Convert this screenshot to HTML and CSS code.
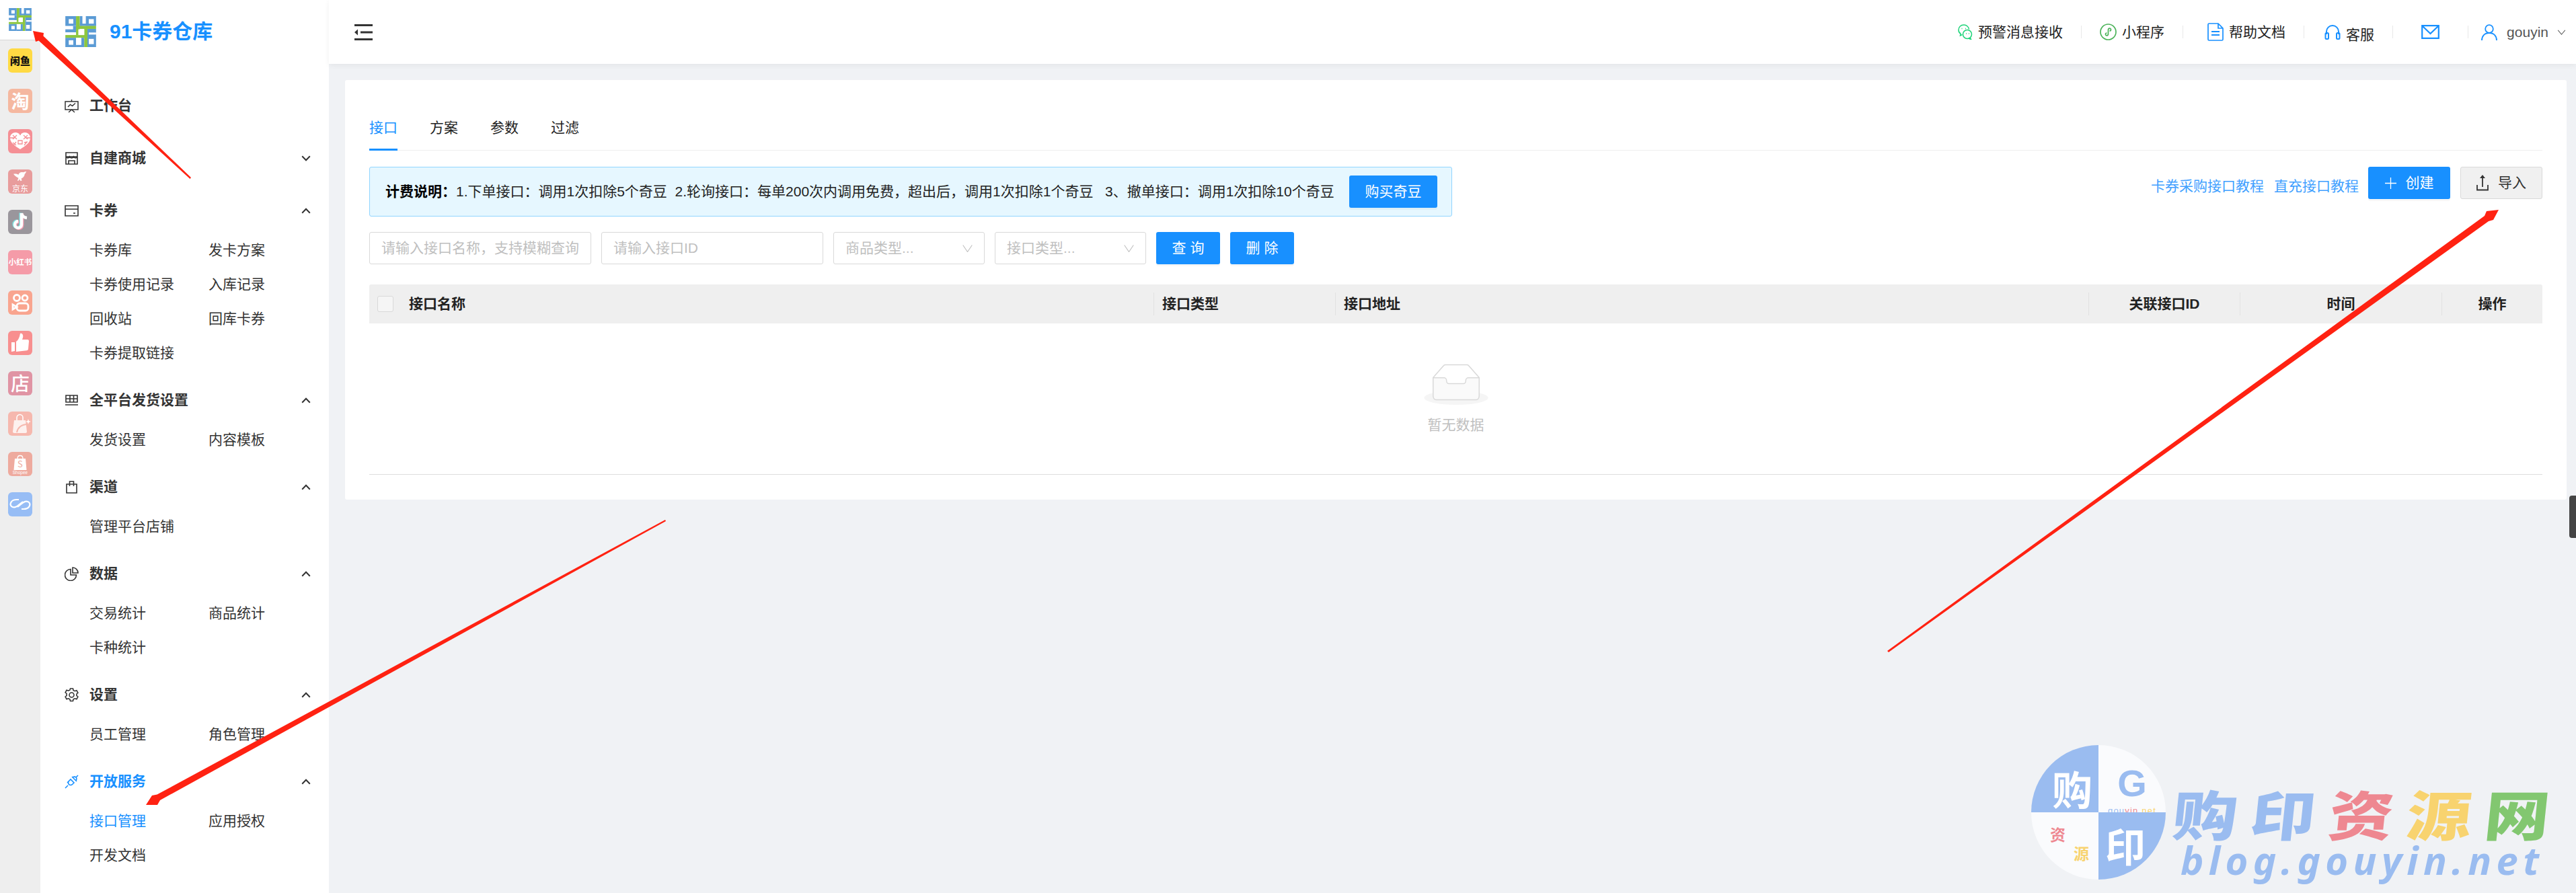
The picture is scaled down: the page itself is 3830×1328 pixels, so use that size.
FILE: index.html
```html
<!DOCTYPE html>
<html lang="zh-CN">
<head>
<meta charset="utf-8">
<title>接口管理</title>
<link rel="stylesheet" href="styles.css">
</head>
<body>
<svg class="defs" width="0" height="0" aria-hidden="true">
  <defs>
    <symbol id="logo" viewBox="0 0 135 136">
      <g fill="#5b9bd5">
        <rect x="0" y="0" width="47" height="43"/><rect x="34" y="43" width="13" height="28"/><rect x="0" y="58" width="47" height="13"/>
        <rect x="63" y="0" width="12" height="43"/><rect x="63" y="33" width="72" height="10"/><rect x="90" y="0" width="45" height="43"/>
        <rect x="97" y="56" width="38" height="80"/>
        <rect x="0" y="95" width="47" height="41"/><rect x="70" y="95" width="13" height="41"/><rect x="47" y="126" width="36" height="10"/>
      </g>
      <g fill="#fff">
        <rect x="15" y="13" width="20" height="20"/><rect x="103" y="13" width="22" height="20"/>
        <rect x="103" y="100" width="22" height="23"/><rect x="15" y="106" width="20" height="20"/>
        <rect x="103" y="72" width="32" height="9"/><rect x="47" y="95" width="23" height="31"/>
      </g>
      <g fill="#8cc63f">
        <rect x="47" y="0" width="16" height="83"/><rect x="47" y="43" width="88" height="13"/>
        <rect x="0" y="83" width="97" height="12"/><rect x="83" y="56" width="14" height="80"/>
      </g>
      <rect x="57" y="58" width="26" height="25" fill="#fff"/>
    </symbol>
    <symbol id="chev" viewBox="0 0 14 9"><path d="M1.2 1.2 7 7.2l5.8-6" fill="none" stroke="currentColor" stroke-width="2"/></symbol>
  </defs>
</svg>

<aside class="rail">
  <div class="rail-top"><svg class="rail-logo"><use href="#logo"/></svg></div>
  <div class="rail-list">
    <div class="app app-xy">闲鱼</div>
    <div class="app app-tb">淘</div>
    <div class="app app-pdd">
      <svg viewBox="0 0 36 36" class="app-svg"><path d="M18 30C10 25 3 20 3 13c0-5 4-8 8-8 3 0 5 1 7 4 2-3 4-4 7-4 4 0 8 3 8 8 0 7-7 12-15 17z" fill="#fff"/><path d="M7 9l6 6M7 15l6-6M23 9l6 6M23 15l6-6M7 20l5 4M12 19l-4 5M24 20l5-1M24 24l4-5M15 17h6v5h-6zM18 5v4M10 13H3M33 13h-7" stroke="#f58f95" stroke-width="1.3" fill="none"/></svg>
    </div>
    <div class="app app-jd">
      <svg viewBox="0 0 36 24" class="app-jd-dog"><path d="M6 7c4-1 6 0 9 1 1-3 4-5 8-4 2-1 4-1 6-2-1 3-2 4-3 5 0 4-3 7-6 8l1 4h-3l-1-3-2 3h-2l2-5c-3-1-6-3-9-7z" fill="#fff"/></svg>
      <span class="app-jd-text">京东</span>
    </div>
    <div class="app app-dy">
      <svg viewBox="0 0 36 36" class="app-svg"><path d="M20 5v17a5 5 0 1 1-5-5" fill="none" stroke="#7fe0e0" stroke-width="4.4" transform="translate(-1.4 -.6)"/><path d="M20 5v17a5 5 0 1 1-5-5" fill="none" stroke="#f8a0b4" stroke-width="4.4" transform="translate(1.2 .8)"/><path d="M20 5v17a5 5 0 1 1-5-5" fill="none" stroke="#fff" stroke-width="4.4"/><path d="M20 5c.6 4 3.500 6.500 8 7" fill="none" stroke="#fff" stroke-width="4.400"/></svg>
    </div>
    <div class="app app-xhs">小红书</div>
    <div class="app app-ks">
      <svg viewBox="0 0 36 36" class="app-svg" fill="none" stroke="#fff" stroke-width="2.800"><circle cx="13" cy="11" r="4.500"/><circle cx="25" cy="11" r="4"/><rect x="13" y="19" width="17" height="11" rx="4"/><path d="M13 24.500l-6-3.500v7z"/></svg>
    </div>
    <div class="app app-zan">
      <svg viewBox="0 0 36 36" class="app-svg"><path d="M5 17h5v13l-5 1zM12 16c3-2 5-6 6-12 3-1 5 2 4 6l-1 3h8c1.500 0 2 1 2 2.500L30 27c-.3 1.500-1 2-2.500 2.200L12 31z" fill="#fff"/></svg>
    </div>
    <div class="app app-dian">店</div>
    <div class="app app-bag">
      <svg viewBox="0 0 36 36" class="app-svg"><path d="M9 13h17l2 17c0 1-1 2-2 2H9c-1 0-2-1-2-2z" fill="#fff" opacity=".8"/><path d="M13 13V9a4.500 4.500 0 0 1 9 0v4" fill="none" stroke="#fff" stroke-width="1.500"/><path d="M13 31c1-6 6-12 16-12" fill="none" stroke="#f6b8ae" stroke-width="2"/><path d="M30 11l1 3 3 1-3 1-1 3-1-3-3-1 3-1z" fill="#fff"/></svg>
    </div>
    <div class="app app-sp">
      <svg viewBox="0 0 36 36" class="app-svg"><path d="M10 10h16l1.500 17h-19z" fill="#fff"/><path d="M14 10c0-6 8-6 8 0" fill="none" stroke="#fff" stroke-width="1.300"/></svg>
      <span class="app-sp-s">S</span>
      <span class="app-sp-t">Shopee</span>
    </div>
    <div class="app app-lk">
      <svg viewBox="0 0 36 36" class="app-svg" fill="none" stroke="#fff" stroke-width="2.200"><path d="M16 11h-3c-9 0-11 7-8 10 3 3 8 1 12-3l5-4"/><path d="M20 25h3c9 0 11-7 8-10-3-3-8-1-12 3l-5 4"/></svg>
    </div>
  </div>
</aside>

<nav class="side">
  <div class="brand"><svg class="brand-logo"><use href="#logo"/></svg><span class="brand-name">91卡券仓库</span></div>
  <div class="group">
    <div class="title"><svg class="mi" viewBox="0 0 21 21" fill="none" stroke="currentColor" stroke-width="1.500"><path d="M1 4h19v12H1zM10.500 1v3M6 20l4.500-4 4.500 4M5 12l3.500-3.500 3 2L16 6.500"/></svg>工作台</div>
  </div>
  <div class="group">
    <div class="title"><svg class="mi" viewBox="0 0 21 21" fill="none" stroke="currentColor" stroke-width="1.600"><path d="M2 2h17v17H2zM2 8h17M2 8c1 2.500 4 2.500 5.500 0 1 2.500 4.500 2.500 6 0 1 2.500 4.500 2.500 5.500 0M6 19v-5h9v5"/></svg>自建商城<svg class="chev"><use href="#chev"/></svg></div>
  </div>
  <div class="group">
    <div class="title"><svg class="mi" viewBox="0 0 21 21" fill="none" stroke="currentColor" stroke-width="1.600"><path d="M1 3h19v15H1zM1 8h19M13 14h3"/></svg>卡券<svg class="chev up"><use href="#chev"/></svg></div>
    <div class="subs">
      <a>卡券库</a><a>发卡方案</a><a>卡券使用记录</a><a>入库记录</a><a>回收站</a><a>回库卡券</a><a>卡券提取链接</a>
    </div>
  </div>
  <div class="group">
    <div class="title"><svg class="mi" viewBox="0 0 21 21" fill="none" stroke="currentColor" stroke-width="1.600"><path d="M2 3h17v10H2zM2 8h17M8 3v10M13.500 3v10M1 17h19" /></svg>全平台发货设置<svg class="chev up"><use href="#chev"/></svg></div>
    <div class="subs"><a>发货设置</a><a>内容模板</a></div>
  </div>
  <div class="group">
    <div class="title"><svg class="mi" viewBox="0 0 21 21" fill="none" stroke="currentColor" stroke-width="1.600"><path d="M3 6h15v13H3zM7.500 9V2h6v7"/></svg>渠道<svg class="chev up"><use href="#chev"/></svg></div>
    <div class="subs"><a>管理平台店铺</a></div>
  </div>
  <div class="group">
    <div class="title"><svg class="mi" viewBox="0 0 21 21" fill="none" stroke="currentColor" stroke-width="1.600"><path d="M9 3.500a8.500 8.500 0 1 0 8.500 8.500H9zM12 1v8h8a8 8 0 0 0-8-8z"/></svg>数据<svg class="chev up"><use href="#chev"/></svg></div>
    <div class="subs"><a>交易统计</a><a>商品统计</a><a>卡种统计</a></div>
  </div>
  <div class="group">
    <div class="title"><svg class="mi" viewBox="0 0 21 21" fill="none" stroke="currentColor" stroke-width="1.600"><path d="M8.500 1h4l.6 2.600 2.300 1.100 2.500-.9 2 3.500-2 1.700v2.500l2 1.700-2 3.500-2.500-.9-2.300 1.100-.6 2.600h-4l-.6-2.600-2.300-1.100-2.500.9-2-3.500 2-1.700V8.500l-2-1.700 2-3.500 2.500.9 2.300-1.100z"/><circle cx="10.500" cy="10.500" r="3.500"/></svg>设置<svg class="chev up"><use href="#chev"/></svg></div>
    <div class="subs"><a>员工管理</a><a>角色管理</a></div>
  </div>
  <div class="group">
    <div class="title is-on"><svg class="mi" viewBox="0 0 21 21" fill="none" stroke="currentColor" stroke-width="1.600"><path d="M4 12l5-5 5 5-2.500 2.500a3.500 3.500 0 0 1-5 0 3.500 3.500 0 0 1 0-5M1 20l4-4M20 1l-3 3M12 4.500c1-1.500 3.500-2 5-.5s1 4-.5 5M11 3l7 7"/></svg>开放服务<svg class="chev up"><use href="#chev"/></svg></div>
    <div class="subs"><a class="is-on">接口管理</a><a>应用授权</a><a>开发文档</a></div>
  </div>
</nav>

<main class="main">
  <header class="top">
    <svg class="fold" viewBox="0 0 27 24"><path d="M0 0h27v3H0zM0 21h27v3H0zM9 10.500h18v3H9zM5 7.500v9L0 12z" fill="#333"/></svg>
    <div class="top-items">
      <div class="ti"><svg class="ti-wx" viewBox="0 0 22 23" fill="none" stroke="#1fd47a" stroke-width="1.500"><path d="M9 1C4 1 1 4.500 1 8.500c0 2.500 1 4.500 3 5.500l-.5 3 3-1.500"/><path d="M9 1c4 0 7 3 7.500 6.500"/><circle cx="14" cy="15" r="6.500"/><path d="M18 20l1.500 2.500-4-1.500M5.500 6.500h1M11 6.500h1M12 14h1M16 14h1"/></svg>预警消息接收</div>
      <i class="sep"></i>
      <div class="ti"><svg class="ti-mp" viewBox="0 0 25 25" fill="none" stroke="#4cb35a" stroke-width="1.700"><circle cx="12.500" cy="12.500" r="11.500"/><path d="M12.500 9.500v6c0 3-4 3-4 .5 0-1.500 1-2 2-2M12.500 15.500v-6c0-3 4-3 4-.5 0 1.500-1 2-2 2"/></svg>小程序</div>
      <i class="sep"></i>
      <div class="ti ti-doc"><svg class="ti-dc" viewBox="0 0 24 27" fill="none" stroke="#1890ff" stroke-width="1.700"><path d="M1 2.500C1 1.500 1.500 1 2.500 1H16l7 7v16.500c0 1-.5 1.500-1.500 1.500h-19C1.500 26 1 25.500 1 24.500zM16 1v7h7"/><path d="M6 13h12M6 18h12" stroke-width="2"/></svg>帮助文档</div>
      <i class="sep"></i>
      <div class="ti ti-kf"><svg class="ti-hs" viewBox="0 0 24 23" fill="none" stroke="#1890ff" stroke-width="2"><path d="M3 15V11a9 9 0 0 1 18 0v4"/><rect x="1.500" y="13" width="4.500" height="9" rx="1.500"/><rect x="18" y="13" width="4.500" height="9" rx="1.500"/></svg><span class="ti-low">客服</span></div>
      <i class="sep"></i>
      <div class="ti ti-mail"><svg class="ti-ml" viewBox="0 0 27 21" fill="none" stroke="#1890ff" stroke-width="2.200"><path d="M1.200 1.200h24.600v18.600H1.200zM2 2l11.500 11L25 2"/></svg></div>
      <i class="sep"></i>
      <div class="ti ti-user"><svg class="ti-us" viewBox="0 0 24 24" fill="none" stroke="#1890ff" stroke-width="1.800"><circle cx="12" cy="7" r="5.800"/><path d="M1 24c0-6.500 4-11 11-11s11 4.500 11 11"/></svg><span class="ti-name">gouyin</span><svg class="v-user" viewBox="0 0 14 9"><path d="M1 1l6 7 6-7" fill="none" stroke="#666" stroke-width="1.200"/></svg></div>
    </div>
  </header>

  <section class="card">
    <div class="tabs"><a class="tab is-on">接口</a><a class="tab">方案</a><a class="tab">参数</a><a class="tab">过滤</a></div>
    <div class="bar">
      <div class="bar-left">
        <div class="alert">
          <p class="alert-text"><b>计费说明&#xFF1A;</b>1.下单接口&#xFF1A;调用1次扣除5个奇豆&nbsp;&nbsp;2.轮询接口&#xFF1A;每单200次内调用免费&#xFF0C;超出后&#xFF0C;调用1次扣除1个奇豆&nbsp;&nbsp;&nbsp;3、撤单接口&#xFF1A;调用1次扣除10个奇豆</p>
          <button class="btn btn-p btn-buy">购买奇豆</button>
        </div>
        <div class="filters">
          <div class="field f-name">请输入接口名称&#xFF0C;支持模糊查询</div>
          <div class="field f-id">请输入接口ID</div>
          <div class="field f-sel">商品类型...<svg class="v" viewBox="0 0 15 11"><path d="M.7.500 7.500 10.500 14.300.500" fill="none" stroke="#bfbfbf" stroke-width="1.100"/></svg></div>
          <div class="field f-sel">接口类型...<svg class="v" viewBox="0 0 15 11"><path d="M.7.500 7.500 10.500 14.300.500" fill="none" stroke="#bfbfbf" stroke-width="1.100"/></svg></div>
          <button class="btn btn-p btn-q">查 询</button>
          <button class="btn btn-p btn-q">删 除</button>
        </div>
      </div>
      <div class="bar-right">
        <a class="link">卡券采购接口教程</a>
        <a class="link">直充接口教程</a>
        <button class="btn btn-p btn-act"><svg class="plus" viewBox="0 0 17 17"><path d="M8.500 0v17M0 8.500h17" stroke="#fff" stroke-width="1.300"/></svg>创建</button>
        <button class="btn btn-d btn-act"><svg class="upl" viewBox="0 0 18 24"><path d="M1 15v7.500h16V15" fill="none" stroke="#333" stroke-width="1.800"/><path d="M9 18V3" stroke="#333" stroke-width="1.800"/><path d="M9 0l4 5H5z" fill="#333"/></svg>导入</button>
      </div>
    </div>
    <div class="thead">
      <div class="th th-first"><span class="check"></span>接口名称</div>
      <div class="th"><span class="cell">接口类型</span></div>
      <div class="th"><span class="cell">接口地址</span></div>
      <div class="th"><span class="cell cell-c">关联接口ID</span></div>
      <div class="th"><span class="cell cell-c">时间</span></div>
      <div class="th"><span class="cell cell-c">操作</span></div>
    </div>
    <div class="empty">
      <svg class="empty-ic" viewBox="0 0 64 41"><g transform="translate(0 1)" fill="none" fill-rule="evenodd"><ellipse fill="#f5f5f5" cx="32" cy="33" rx="32" ry="7"/><g fill-rule="nonzero" stroke="#d9d9d9"><path d="M55 12.760L44.854 1.258C44.367.474 43.656 0 42.907 0H21.093c-.749 0-1.460.474-1.947 1.257L9 12.761V22h46v-9.240z"/><path d="M41.613 15.931c0-1.605.994-2.930 2.227-2.931H55v18.137C55 33.260 53.680 35 52.050 35h-40.100C10.320 35 9 33.259 9 31.137V13h11.160c1.233 0 2.227 1.323 2.227 2.928v.022c0 1.605 1.005 2.901 2.237 2.901h14.752c1.232 0 2.237-1.308 2.237-2.913v-.007z" fill="#fafafa"/></g></g></svg>
      <div class="empty-t">暂无数据</div>
    </div>
  </section>
</main>

<div class="edge-tab"></div>

<div class="wm">
  <div class="wm-disc">
    <div class="q q-a">购</div>
    <div class="q q-b"><span class="wm-g">G</span><span class="wm-net"><i class="c1">gou</i><i class="c2">yin</i><i class="c3">.</i><i class="c4">net</i></span></div>
    <div class="q q-c"><span class="wm-zi">资</span><span class="wm-yuan">源</span></div>
    <div class="q q-d">印</div>
  </div>
  <div class="wm-side">
    <div class="wm-title"><span class="t-b">购</span><span class="t-b">印</span><span class="t-r">资</span><span class="t-y">源</span><span class="t-g">网</span></div>
    <div class="wm-url">blog.gouyin.net</div>
  </div>
</div>

<svg class="arrows" viewBox="0 0 3830 1328" aria-hidden="true">
  <polygon points="284,264 282.500,266 57.600,60.600 53,62 49,46 65,49 64.400,53.400"/>
  <polygon points="989,773 990,775 238,1190 234,1197 217,1197 226,1183 233.600,1181.600"/>
  <polygon points="2806,968 2808,970 3700,329 3707,327 3715,312 3697,314 3694,321"/>
</svg>
</body>
</html>
```

FILE: styles.css
```css
* { box-sizing: border-box; }
html, body { margin: 0; height: 100%; }
body {
  width: 3830px; height: 1328px; overflow: hidden; position: relative;
  display: flex; background: #f0f2f5; color: #333;
  font: 21px/1.5 "Liberation Sans", "Noto Sans CJK SC", sans-serif;
}
.defs { position: absolute; }
a { color: inherit; text-decoration: none; }
i { font-style: normal; }

/* app rail */
.rail { width: 60px; flex: none; background: #eee; }
.rail-top { height: 60px; background: #fff; border-bottom: 1px solid #d6d6d6; display: flex; justify-content: center; padding-top: 12px; }
.rail-logo { width: 34px; height: 34px; }
.rail-list { padding: 12px 12px 0; display: flex; flex-direction: column; gap: 24px; }
.app {
  width: 36px; height: 36px; border-radius: 6px; position: relative;
  display: flex; align-items: center; justify-content: center;
  color: #fff; font-weight: 700; font-family: "Noto Sans CJK SC", sans-serif; line-height: 1.2;
}
.app-svg { width: 36px; height: 36px; display: block; }
.app-xy { background: #ffda44; color: #111; font-size: 15px; font-weight: 900; }
.app-tb { background: #f5b8a0; font-size: 27px; }
.app-pdd { background: #f58f95; }
.app-jd { background: #e89c9c; flex-direction: column; justify-content: flex-start; }
.app-jd-dog { width: 30px; height: 20px; margin-top: 1px; display: block; }
.app-jd-text { font-size: 12px; font-weight: 400; line-height: 14px; }
.app-dy { background: #9a969c; }
.app-xhs { background: #f59ba8; font-size: 11.500px; }
.app-ks { background: #f9a58f; }
.app-zan { background: #f88f8f; }
.app-dian { background: #e094a4; font-size: 28px; font-weight: 500; }
.app-bag { background: #f6b8ae; }
.app-sp { background: #eeaa9e; }
.app-sp-s { position: absolute; left: 14px; top: 10px; font-size: 13px; font-weight: 400; color: #eeaa9e; }
.app-sp-t { position: absolute; left: 0; right: 0; bottom: 1px; font-size: 6.500px; text-align: center; font-weight: 400; font-family: "Liberation Sans", sans-serif; }
.app-lk { background: #97bdf5; }

/* side menu */
.side { width: 429px; flex: none; background: #fff; }
.brand { height: 124px; padding: 24px 0 0 37px; display: flex; align-items: flex-start; gap: 20px; }
.brand-logo { width: 46px; height: 46px; flex: none; }
.brand-name { font-size: 30px; line-height: 46px; font-weight: 700; color: #1890ff; }
.group { padding-bottom: 12px; }
.title { height: 66px; display: flex; align-items: center; padding: 0 27px 0 36px; font-weight: 700; color: #333; }
.title.is-on { color: #1890ff; }
.mi { width: 21px; height: 21px; flex: none; margin-right: 16px; color: #333; }
.is-on .mi { color: #1890ff; }
.chev { width: 14px; height: 9px; margin-left: auto; color: #333; }
.chev.up { transform: rotate(180deg); }
.subs { display: grid; grid-template-columns: 177px 177px; padding-left: 73px; }
.subs a { height: 51px; line-height: 51px; color: #333; }
.subs a.is-on { color: #1890ff; }

/* main column */
.main { flex: 1; min-width: 0; }
.top {
  height: 95px; background: #fff; box-shadow: 0 2px 8px rgba(0, 0, 0, .06);
  display: flex; align-items: center; justify-content: space-between; padding: 0 15px 0 38px;
}
.fold { width: 27px; height: 24px; }
.top-items { display: flex; align-items: center; }
.ti { display: flex; align-items: center; gap: 8px; color: #222; white-space: nowrap; }
.sep { width: 1px; height: 19px; background: #e8e8e8; margin: 0 27px; }
.ti-wx { width: 22px; height: 23px; }
.ti-mp { width: 25px; height: 25px; }
.ti-dc { width: 24px; height: 27px; }
.ti-hs { width: 24px; height: 23px; }
.ti-ml { width: 27px; height: 21px; }
.ti-us { width: 24px; height: 24px; }
.ti-doc { padding-left: 9px; }
.ti-kf { padding-left: 3px; }
.ti-low { position: relative; top: 4px; }
.ti-mail { padding: 0 15px; }
.ti-user { margin-left: -8px; gap: 14px; }
.ti-name { color: #555; }
.v-user { width: 13px; height: 8px; margin-left: -1px; }

.card { margin: 24px 14px 0 24px; height: 624px; background: #fff; border-radius: 3px; padding: 48px 36px 0; }
.tabs { display: flex; gap: 48px; height: 57px; border-bottom: 1px solid #eee; }
.tab { height: 57px; line-height: 46px; border-bottom: 3px solid transparent; color: #222; }
.tab.is-on { color: #1890ff; border-bottom-color: #1890ff; }

.bar { display: flex; justify-content: space-between; align-items: flex-start; margin-top: 24px; }
.alert {
  width: 1610px; height: 74px; background: #e6f7ff; border: 1px solid #91d5ff; border-radius: 3px;
  display: flex; align-items: center; justify-content: space-between; padding: 0 21px 0 23px;
}
.alert-text { margin: 0; color: #222; white-space: nowrap; }
.alert-text b { color: #000; }
.btn { border: 0; border-radius: 3px; font: inherit; padding: 0; display: flex; align-items: center; justify-content: center; white-space: nowrap; }
.btn-p { background: #1890ff; color: #fff; box-shadow: 0 3px 0 rgba(0, 0, 0, .03); }
.btn-d { background: #f0f0f0; color: #333; border: 1px solid #d9d9d9; }
.btn-buy { width: 131px; height: 48px; }
.filters { display: flex; gap: 15px; margin-top: 23px; }
.field {
  height: 48px; line-height: 46px; border: 1px solid #d9d9d9; border-radius: 3px; padding: 0 17px;
  color: #bfbfbf; background: #fff; position: relative; white-space: nowrap;
}
.f-name, .f-id { width: 330px; }
.f-sel { width: 225px; display: flex; align-items: center; justify-content: space-between; padding-right: 17px; }
.v { width: 15px; height: 11px; }
.btn-q { width: 95px; height: 48px; }
.bar-right { display: flex; align-items: flex-start; gap: 15px; }
.link { color: #40a0ff; line-height: 58px; }
.link + .link { margin-right: -1px; }
.btn-act { width: 122px; height: 48px; gap: 14px; }
.plus { width: 17px; height: 17px; }
.upl { width: 18px; height: 24px; }

.thead {
  height: 58px; margin-top: 30px; background: #efefef; border-radius: 3px 3px 0 0;
  display: grid; grid-template-columns: 1166px 270px 1120px 225px 300px 150px; align-items: center;
  font-weight: 700; color: #222;
}
.th-first { display: flex; align-items: center; padding-left: 12px; }
.check { width: 24px; height: 24px; border: 1px solid #d9d9d9; border-radius: 3px; background: #f5f5f5; margin-right: 23px; }
.cell { display: flex; align-items: center; height: 34px; border-left: 1px solid #e2e2e2; padding-left: 12px; }
.cell-c { justify-content: center; padding-left: 0; }

.empty { height: 225px; border-bottom: 1px solid #ddd; padding-top: 60px; display: flex; flex-direction: column; align-items: center; }
.empty-ic { width: 96px; height: 61px; display: block; }
.empty-t { color: #bfbfbf; line-height: 30px; margin-top: 15px; }

.edge-tab { position: absolute; right: 0; top: 737px; width: 10px; height: 63px; background: #444; border-radius: 4px 0 0 4px; }

/* watermark */
.wm { position: absolute; left: 3020px; top: 1108px; display: flex; gap: 11px; pointer-events: none; font-family: "Noto Sans CJK SC", sans-serif; }
.wm-disc { width: 200px; height: 200px; border-radius: 50%; overflow: hidden; display: grid; grid-template-columns: 100px 100px; grid-template-rows: 100px 100px; }
.q { position: relative; font-weight: 700; line-height: 1; }
.q-a { background: #9abcf0; color: #fff; font-size: 60px; padding: 34px 0 0 31px; }
.q-b { background: #fafbfd; display: flex; flex-direction: column; align-items: center; padding-top: 29px; }
.q-c { background: #fafbfd; font-size: 23px; }
.q-d { background: #9abcf0; color: #fff; font-size: 60px; padding: 18px 0 0 10px; }
.wm-g { font: 700 56px/1 "Liberation Sans", sans-serif; color: #9abcf0; }
.wm-net { font: 400 13px/1 "Liberation Sans", sans-serif; letter-spacing: 1.200px; margin-top: 6px; }
.c1 { color: #9abcf0; } .c2 { color: #ee8891; } .c3 { color: #f8d36f; } .c4 { color: #f8d36f; }
.wm-zi { position: absolute; left: 28px; top: 21px; color: #ee8891; }
.wm-yuan { position: absolute; left: 63px; top: 49px; color: #f8d36f; }
.wm-side { padding-top: 60px; }
.wm-title { display: flex; height: 82px; }
.wm-title span {
  width: 80px; margin-right: 36px; font-size: 80px; line-height: 80px; font-weight: 900;
  display: block; transform: skewX(-6deg) scaleX(1.2); transform-origin: left center;
}
.t-b { color: #9abcf0; } .t-r { color: #ee8891; } .t-y { color: #f8d36f; } .t-g { color: #82c770; }
.wm-url { font: italic 700 58px/1 "Noto Sans", sans-serif; color: #9abcf0; letter-spacing: 7.300px; margin-left: 11px; white-space: nowrap; }

.arrows { position: absolute; left: 0; top: 0; width: 3830px; height: 1328px; pointer-events: none; }
.arrows polygon { fill: #ff2212; }
```
